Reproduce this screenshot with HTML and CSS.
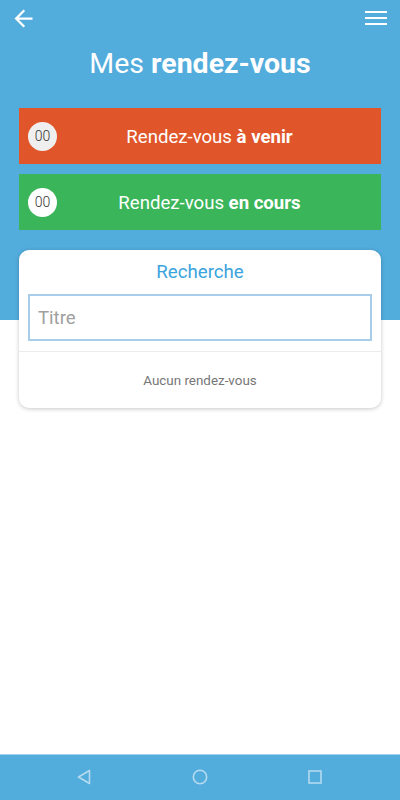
FILE: index.html
```html
<!DOCTYPE html>
<html lang="fr">
<head>
  <meta charset="UTF-8">
  <meta name="viewport" content="width=device-width, initial-scale=1">
  <title>Mes rendez-vous</title>
  <link rel="stylesheet" href="styles.css">
</head>
<body>
  <div class="screen">
    <main class="main">
      <div class="topbar">
        <svg class="back" width="27" height="27" viewBox="0 0 24 24">
          <path d="M20 11H7.83l5.59-5.59L12 4l-8 8 8 8 1.41-1.41L7.83 13H20v-2z" fill="#fff"/>
        </svg>
        <svg class="menu" width="22" height="16" viewBox="0 0 22 16">
          <rect x="0" y="1" width="22" height="2" fill="#fff"/>
          <rect x="0" y="7" width="22" height="2" fill="#fff"/>
          <rect x="0" y="13" width="22" height="2" fill="#fff"/>
        </svg>
      </div>

      <h1 class="title">Mes <b>rendez-vous</b></h1>

      <div class="bars">
        <div class="bar bar-upcoming">
          <span class="count count-grey">00</span>
          <span class="bar-label">Rendez-vous <b>à venir</b></span>
        </div>
        <div class="bar bar-current">
          <span class="count">00</span>
          <span class="bar-label">Rendez-vous <b>en cours</b></span>
        </div>
      </div>

      <div class="card">
        <div class="card-title">Recherche</div>
        <div class="search">
          <input type="text" placeholder="Titre">
        </div>
        <div class="empty">Aucun rendez-vous</div>
      </div>
    </main>

    <nav class="navbar">
      <svg width="14" height="16" viewBox="0 0 14 16">
        <path d="M12.5 1.5 L1.5 8 L12.5 14.5 Z" fill="none" stroke="#b4dbf0" stroke-width="1.6" stroke-linejoin="round"/>
      </svg>
      <svg width="16" height="16" viewBox="0 0 16 16">
        <circle cx="8" cy="8" r="6.7" fill="none" stroke="#b4dbf0" stroke-width="1.6"/>
      </svg>
      <svg width="14" height="14" viewBox="0 0 14 14">
        <rect x="1" y="1" width="12" height="12" fill="none" stroke="#b4dbf0" stroke-width="1.6"/>
      </svg>
    </nav>
  </div>
</body>
</html>
```

FILE: styles.css
```css
* {
  box-sizing: border-box;
}
body {
  margin: 0;
  font-family: Roboto, "Liberation Sans", sans-serif;
  background: #fff;
}
.screen {
  height: 800px;
  display: flex;
  flex-direction: column;
}
.main {
  flex: 1;
  background: linear-gradient(#52acdc 320px, #fff 320px);
}
.topbar {
  height: 36px;
  display: flex;
  justify-content: space-between;
  align-items: center;
  padding: 0 13px 0 10px;
}
.back {
  margin-top: 1px;
}
.title {
  margin: 10px 0 26px;
  line-height: 36px;
  font-size: 28.5px;
  font-weight: 400;
  color: #fff;
  text-align: center;
}
.title b {
  font-weight: 700;
}
.bars {
  padding: 0 19px;
  display: flex;
  flex-direction: column;
  gap: 10px;
}
.bar {
  height: 56px;
  display: flex;
  align-items: center;
  padding: 0 19px 0 9px;
  color: #fff;
}
.bar-upcoming {
  background: #e0562a;
}
.bar-current {
  background: #3bb55a;
}
.count {
  width: 29px;
  height: 29px;
  border-radius: 50%;
  background: #fff;
  color: #333;
  font-size: 14px;
  font-weight: 300;
  display: flex;
  align-items: center;
  justify-content: center;
}
.count-grey {
  background: #efefef;
}
.bar-label {
  flex: 1;
  text-align: center;
  font-size: 18.6px;
  padding-top: 2px;
}
.card {
  margin: 20px 19px 0;
  background: #fff;
  border-radius: 10px;
  box-shadow: 0 1px 4px rgba(0, 0, 0, 0.22);
  padding-top: 10px;
}
.card-title {
  text-align: center;
  color: #3ba4dd;
  font-size: 18.7px;
  line-height: 24px;
}
.search {
  padding: 10px 9px;
  border-bottom: 1px solid #ececec;
}
.search input {
  display: block;
  width: 100%;
  height: 47px;
  border: 2px solid #a8cdea;
  padding: 0 8px;
  font-family: inherit;
  font-size: 18.6px;
  color: #333;
  outline: none;
}
.search input::placeholder {
  color: #a0a0a0;
}
.empty {
  height: 56px;
  display: flex;
  align-items: center;
  justify-content: center;
  font-size: 13.4px;
  color: #767676;
}
.navbar {
  height: 46px;
  background: #52acdc;
  border-top: 1px solid #9fd0ec;
  display: flex;
  align-items: center;
  justify-content: space-between;
  padding: 0 78px 2px 77px;
}
```
